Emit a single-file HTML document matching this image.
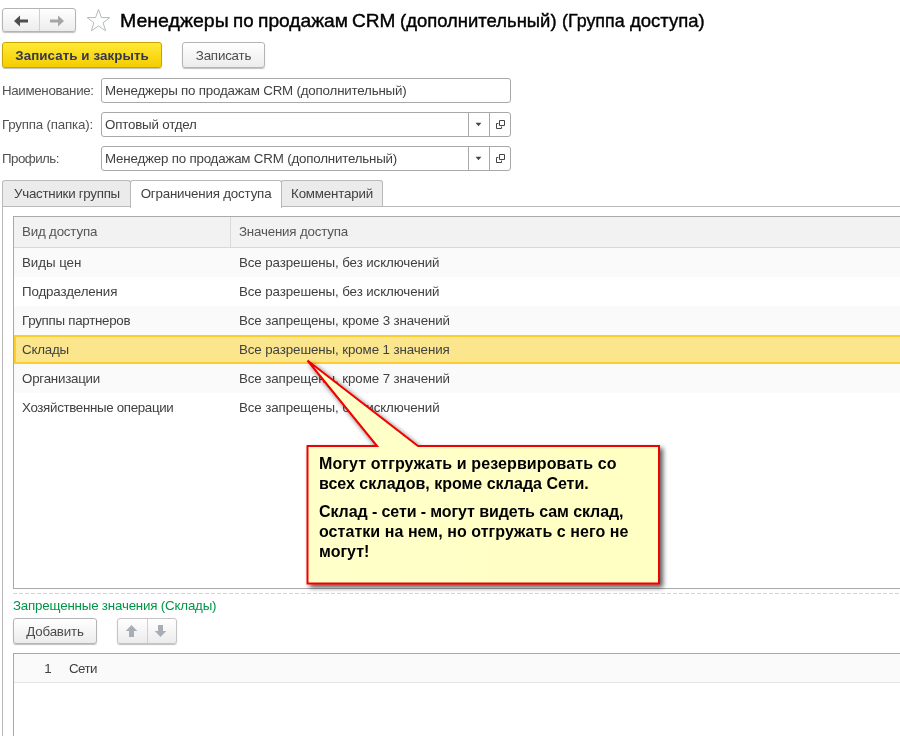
<!DOCTYPE html>
<html lang="ru">
<head>
<meta charset="utf-8">
<title>Группа доступа</title>
<style>
html,body{margin:0;padding:0;}
body{width:900px;height:736px;overflow:hidden;background:#fff;position:relative;will-change:transform;
  font-family:"Liberation Sans",sans-serif;font-size:13.33px;letter-spacing:-0.19px;color:#414141;}
.abs{position:absolute;white-space:nowrap;}
.btn{position:absolute;box-sizing:border-box;border:1px solid #b4b4b4;border-radius:3px;
  background:linear-gradient(#ffffff,#ececec);box-shadow:0 1px 1px rgba(0,0,0,.25);
  text-align:center;color:#4c4c4c;}
.title{left:120px;top:10px;letter-spacing:0;font-size:18.6px;color:#000;line-height:22px;-webkit-text-stroke:0.4px #000;}
.lbl{left:2px;color:#525252;line-height:16px;letter-spacing:-0.34px;}
.inp{position:absolute;box-sizing:border-box;border:1px solid #a8a8a8;border-radius:3px;background:#fff;
  height:25px;left:101px;width:410px;}
.inp .t{position:absolute;left:3px;top:4px;line-height:16px;color:#414141;white-space:nowrap;}
.inp .d1,.inp .d2{position:absolute;top:0;bottom:0;width:1px;background:#a8a8a8;}
.inp .d1{left:366px;} .inp .d2{left:387px;}
.tab{position:absolute;box-sizing:border-box;top:180px;height:26px;border:1px solid #b9b9b9;border-bottom:none;
  border-radius:3px 3px 0 0;background:#ebebeb;line-height:25px;text-align:center;color:#414141;white-space:nowrap;}
.tab.act{background:#fff;height:28px;z-index:2;}
.row{position:absolute;left:14px;right:0;height:29px;}
.row span{position:absolute;top:7px;line-height:16px;white-space:nowrap;color:#414141;}
.row .c1{left:8px;letter-spacing:-0.33px;} .row .c2{left:225px;letter-spacing:-0.1px;}
</style>
</head>
<body>

<!-- nav buttons -->
<div class="btn" style="left:2px;top:8px;width:74px;height:24px;"></div>
<div class="abs" style="left:39px;top:9px;width:1px;height:22px;background:#cfcfcf;"></div>
<svg class="abs" style="left:2px;top:8.7px;" width="74" height="24" viewBox="0 0 74 24">
  <path d="M12 12 L18 6.5 L18 10.5 L26 10.5 L26 13.5 L18 13.5 L18 17.5 Z" fill="#4d4d4d"/>
  <path d="M62 12 L56 6.5 L56 10.5 L48 10.5 L48 13.5 L56 13.5 L56 17.5 Z" fill="#a6a6a6"/>
</svg>
<!-- star -->
<svg class="abs" style="left:86px;top:8px;" width="26" height="24" viewBox="0 0 26 24">
  <path d="M12.5 1.3 L15.4 9.6 L23.8 9.6 L17.1 14.7 L19.6 22.8 L12.5 17.9 L5.4 22.8 L7.9 14.7 L1.2 9.6 L9.6 9.6 Z" fill="#fff" stroke="#b3b9be" stroke-width="1"/>
</svg>
<div class="abs title" style="left:0;width:900px;"><span style="position:absolute;left:120.3px;transform-origin:0 0;transform:scaleX(1.05);">Менеджеры</span> <span style="position:absolute;left:232.9px;transform-origin:0 0;transform:scaleX(1.01);">по</span> <span style="position:absolute;left:258.1px;transform-origin:0 0;transform:scaleX(1.032);">продажам</span> <span style="position:absolute;left:352.1px;transform-origin:0 0;transform:scaleX(1.025);">CRM</span> <span style="position:absolute;left:400.1px;transform-origin:0 0;transform:scaleX(0.993);">(дополнительный)</span> <span style="position:absolute;left:562.1px;transform-origin:0 0;transform:scaleX(0.962);">(Группа</span> <span style="position:absolute;left:629.8px;transform-origin:0 0;transform:scaleX(0.995);">доступа)</span> </div>

<!-- command bar -->
<div class="btn" style="left:2px;top:42px;width:160px;height:26px;letter-spacing:0.08px;border-color:#c8a400;background:linear-gradient(#ffe936,#f4cd00);
  color:#33374f;font-weight:bold;line-height:26px;">Записать и закрыть</div>
<div class="btn" style="left:182px;top:42px;width:83px;height:26px;line-height:26px;">Записать</div>

<!-- fields -->
<div class="abs lbl" style="top:83px;">Наименование:</div>
<div class="inp" style="top:78px;"><span class="t">Менеджеры по продажам CRM (дополнительный)</span></div>
<div class="abs lbl" style="top:117px;letter-spacing:-0.2px">Группа (папка):</div>
<div class="inp" style="top:112px;"><span class="t">Оптовый отдел</span><i class="d1"></i><i class="d2"></i>
  <svg class="abs" style="left:368px;top:0" width="42" height="23" viewBox="0 0 42 23">
    <path d="M5.6 9.8 L11.4 9.8 L8.5 13.2 Z" fill="#454545"/>
    <path d="M29.5 7.5 H34.5 V12.5 H29.5 Z M28.4 10.5 H26.5 V15.5 H31.5 V13.6" fill="none" stroke="#454545" stroke-width="1"/>
  </svg>
</div>
<div class="abs lbl" style="top:151px;letter-spacing:-0.54px">Профиль:</div>
<div class="inp" style="top:146px;"><span class="t">Менеджер по продажам CRM (дополнительный)</span><i class="d1"></i><i class="d2"></i>
  <svg class="abs" style="left:368px;top:0" width="42" height="23" viewBox="0 0 42 23">
    <path d="M5.6 9.8 L11.4 9.8 L8.5 13.2 Z" fill="#454545"/>
    <path d="M29.5 7.5 H34.5 V12.5 H29.5 Z M28.4 10.5 H26.5 V15.5 H31.5 V13.6" fill="none" stroke="#454545" stroke-width="1"/>
  </svg>
</div>

<!-- tabs -->
<div class="abs" style="left:2px;top:206px;width:898px;height:1px;background:#b9b9b9;"></div>
<div class="abs" style="left:2px;top:206px;width:1px;height:530px;background:#b9b9b9;"></div>
<div class="tab" style="left:2px;width:129px;letter-spacing:-0.27px;padding-left:1px;">Участники группы</div>
<div class="tab act" style="left:130px;width:152px;">Ограничения доступа</div>
<div class="tab" style="left:281px;width:102px;">Комментарий</div>

<!-- table 1 -->
<div class="abs" style="left:13px;top:216px;width:900px;height:373px;box-sizing:border-box;border:1px solid #a9a9a9;background:#fff;"></div>
<div class="abs" style="left:14px;top:217px;width:886px;height:30px;background:#f2f2f2;border-bottom:1px solid #d9d9d9;"></div>
<div class="abs" style="left:230px;top:217px;width:1px;height:30px;background:#d9d9d9;"></div>
<div class="abs" style="left:22px;top:224px;line-height:16px;color:#555;">Вид доступа</div>
<div class="abs" style="left:239px;top:224px;line-height:16px;color:#555;">Значения доступа</div>

<div class="row" style="top:248px;background:#fafafa;"><span class="c1" style="letter-spacing:-0.05px">Виды цен</span><span class="c2">Все разрешены, без исключений</span></div>
<div class="row" style="top:277px;"><span class="c1" style="letter-spacing:-0.13px">Подразделения</span><span class="c2">Все разрешены, без исключений</span></div>
<div class="row" style="top:306px;background:#fafafa;"><span class="c1" style="letter-spacing:-0.27px">Группы партнеров</span><span class="c2">Все запрещены, кроме 3 значений</span></div>
<div class="row" style="top:335px;background:#fbe68e;box-sizing:border-box;border:2px solid #fbcd2d;border-right:none;"><span class="c1" style="left:6px;top:5px;letter-spacing:-0.2px">Склады</span><span class="c2" style="left:223px;top:5px;">Все разрешены, кроме 1 значения</span></div>
<div class="row" style="top:364px;background:#fafafa;"><span class="c1" style="letter-spacing:-0.24px">Организации</span><span class="c2">Все запрещены, кроме 7 значений</span></div>
<div class="row" style="top:393px;"><span class="c1">Хозяйственные операции</span><span class="c2">Все запрещены, без исключений</span></div>

<!-- callout -->
<svg class="abs" style="left:290px;top:345px;" width="400" height="260" viewBox="290 345 400 260">
  <defs>
    <filter id="sh" x="-10%" y="-10%" width="125%" height="125%">
      <feGaussianBlur in="SourceAlpha" stdDeviation="2.6"/>
      <feOffset dx="3" dy="3"/>
      <feComponentTransfer><feFuncA type="linear" slope="0.65"/></feComponentTransfer>
      <feMerge><feMergeNode/><feMergeNode in="SourceGraphic"/></feMerge>
    </filter>
    <linearGradient id="yg" x1="0" y1="0" x2="1" y2="0">
      <stop offset="0" stop-color="#ffffc9"/><stop offset="1" stop-color="#ffffc2"/>
    </linearGradient>
  </defs>
  <path d="M307.5 446 L377 446 L307.5 360.5 L418 446 L659 446 L659 583.5 L307.5 583.5 Z" fill="url(#yg)" stroke="#f00000" stroke-width="2" stroke-linejoin="miter" filter="url(#sh)"/>
</svg>
<div class="abs" style="left:319px;top:454px;font-size:16px;letter-spacing:0;font-weight:bold;color:#000;line-height:20px;white-space:normal;width:330px;">
  <span style="letter-spacing:0.1px">Могут отгружать и резервировать со</span><br>всех складов, кроме склада Сети.
  <div style="height:8px"></div>
  <span style="letter-spacing:-0.09px">Склад - сети - могут видеть сам склад,</span><br><span style="letter-spacing:0.05px">остатки на нем, но отгружать с него не</span><br>могут!
</div>

<!-- lower group -->
<div class="abs" style="left:13px;top:593px;width:887px;height:1px;background:repeating-linear-gradient(90deg,#d4d4d4 0,#d4d4d4 4px,transparent 4px,transparent 6px);"></div>
<div class="abs" style="left:13px;top:598px;line-height:16px;color:#009646;">Запрещенные значения (Склады)</div>
<div class="btn" style="left:13px;top:618px;width:84px;height:26px;line-height:26px;">Добавить</div>
<div class="btn" style="left:117px;top:618px;width:60px;height:26px;border-color:#c4c4c4;"></div>
<div class="abs" style="left:147px;top:619px;width:1px;height:24px;background:#cfcfcf;"></div>
<svg class="abs" style="left:117px;top:619px;" width="60" height="25" viewBox="0 0 60 25">
  <path d="M14.5 6 L20.3 12 L17 12 L17 18 L12 18 L12 12 L8.7 12 Z" fill="#a7aeb6"/>
  <path d="M43.5 18 L49.3 12 L46 12 L46 6 L41 6 L41 12 L37.7 12 Z" fill="#a7aeb6"/>
</svg>

<!-- table 2 -->
<div class="abs" style="left:13px;top:653px;width:900px;height:100px;box-sizing:border-box;border:1px solid #a9a9a9;background:#fff;"></div>
<div class="abs" style="left:14px;top:654px;width:886px;height:28px;background:#fafafa;border-bottom:1px solid #e6e6e6;"></div>
<div class="abs" style="left:44.3px;top:661px;line-height:16px;">1</div>
<div class="abs" style="left:69px;top:661px;line-height:16px;letter-spacing:-0.6px;">Сети</div>

</body>
</html>
